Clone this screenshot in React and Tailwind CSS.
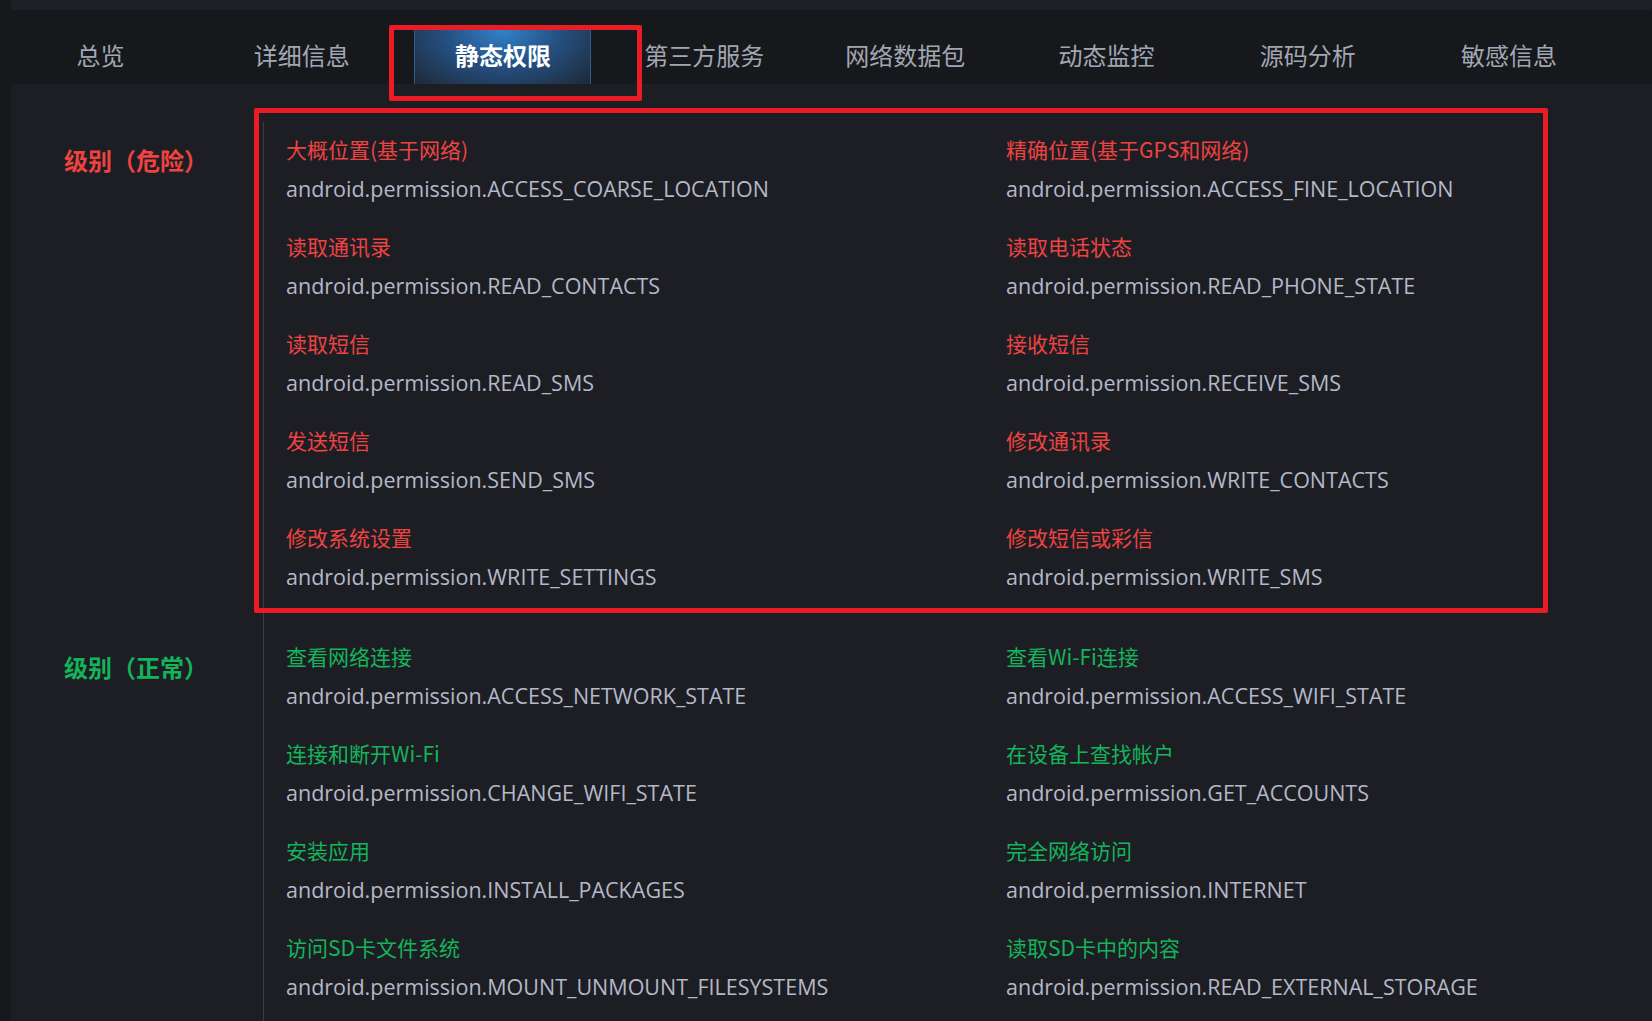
import React from 'react';

const tabs = ['总览', '详细信息', '静态权限', '第三方服务', '网络数据包', '动态监控', '源码分析', '敏感信息'];

const sections = [
  {
    level: '级别（危险）',
    color: 'text-[#ee4340]',
    items: [
      ['大概位置(基于网络)', 'android.permission.ACCESS_COARSE_LOCATION'],
      ['精确位置(基于GPS和网络)', 'android.permission.ACCESS_FINE_LOCATION'],
      ['读取通讯录', 'android.permission.READ_CONTACTS'],
      ['读取电话状态', 'android.permission.READ_PHONE_STATE'],
      ['读取短信', 'android.permission.READ_SMS'],
      ['接收短信', 'android.permission.RECEIVE_SMS'],
      ['发送短信', 'android.permission.SEND_SMS'],
      ['修改通讯录', 'android.permission.WRITE_CONTACTS'],
      ['修改系统设置', 'android.permission.WRITE_SETTINGS'],
      ['修改短信或彩信', 'android.permission.WRITE_SMS'],
    ],
  },
  {
    level: '级别（正常）',
    color: 'text-[#14b45a]',
    items: [
      ['查看网络连接', 'android.permission.ACCESS_NETWORK_STATE'],
      ['查看Wi-Fi连接', 'android.permission.ACCESS_WIFI_STATE'],
      ['连接和断开Wi-Fi', 'android.permission.CHANGE_WIFI_STATE'],
      ['在设备上查找帐户', 'android.permission.GET_ACCOUNTS'],
      ['安装应用', 'android.permission.INSTALL_PACKAGES'],
      ['完全网络访问', 'android.permission.INTERNET'],
      ['访问SD卡文件系统', 'android.permission.MOUNT_UNMOUNT_FILESYSTEMS'],
      ['读取SD卡中的内容', 'android.permission.READ_EXTERNAL_STORAGE'],
    ],
  },
];

const cjk = "font-['Noto_Sans_CJK_SC',sans-serif]";

const App = () => {
  return (
    <div className="relative h-screen w-full overflow-hidden bg-[#17181c]">
      <div className="ml-[11px] h-[10px] rounded-b-[4px] bg-[#1f2026]" />

      <div className="flex h-[74px] pt-[20px]">
        {tabs.map((tab) => {
          const active = tab === '静态权限';
          return (
            <div key={tab} className="flex w-[201.2px] justify-center">
              {active ? (
                <div
                  className={`flex h-[54px] w-[177px] items-center justify-center border-x border-[#2d5f8f] bg-[radial-gradient(ellipse_at_50%_0%,#3282cc_0%,#255184_45%,#1e2937_100%)] pb-[4px] text-[24px] font-bold text-white ${cjk}`}
                >
                  {tab}
                </div>
              ) : (
                <div className={`flex h-[54px] items-center pb-[4px] text-[24px] text-[#a1a7b3] ${cjk}`}>{tab}</div>
              )}
            </div>
          );
        })}
      </div>

      <div className="ml-[11px] rounded-tl-[5px] bg-[#1d1e24] pt-[38px]">
        {sections.map((section) => (
          <div key={section.level} className="flex">
            <div className="w-[252px] shrink-0 pl-[53px] pt-[22px]">
              <div className={`text-[24px] font-bold leading-[32px] ${section.color} ${cjk}`}>{section.level}</div>
            </div>
            <div className="grid flex-1 grid-cols-[720px_720px] gap-y-[29px] border-l border-[#3a3c44] pb-[38px] pl-[22px] pt-[13px]">
              {section.items.map(([title, perm]) => (
                <div key={perm}>
                  <div className={`text-[21px] leading-[28px] ${section.color} ${cjk}`}>{title}</div>
                  <div className="mt-[12px] font-['Open_Sans',sans-serif] text-[21.5px] leading-[28px] text-[#b4b8c7]">
                    {perm}
                  </div>
                </div>
              ))}
            </div>
          </div>
        ))}
      </div>

      {/* annotation boxes */}
      <div className="pointer-events-none absolute left-[389px] top-[25px] h-[76px] w-[253px] rounded-[2px] border-[5px] border-[#ea1d26]" />
      <div className="pointer-events-none absolute left-[254px] top-[108px] h-[505px] w-[1294px] rounded-[2px] border-[5px] border-[#ea1d26]" />
    </div>
  );
};

export default App;
